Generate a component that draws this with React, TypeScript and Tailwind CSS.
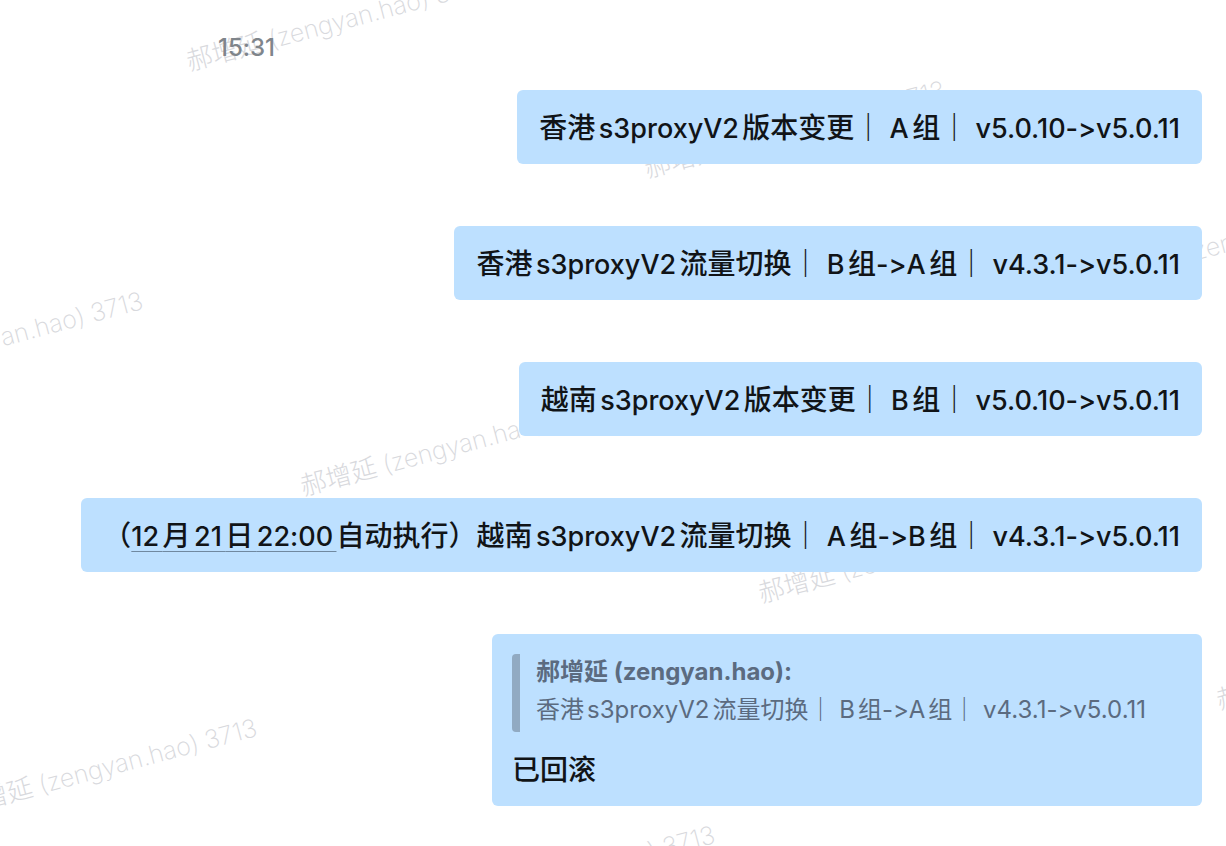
import { Fragment } from 'react';
import type { ReactNode } from 'react';

const WATERMARKS = [
  { left: 187, top: 46 },
  { left: 645, top: 153 },
  { left: 1103, top: 260 },
  { left: -157, top: 364 },
  { left: 301, top: 471 },
  { left: 759, top: 578 },
  { left: 1217, top: 685 },
  { left: -43, top: 791 },
  { left: 415, top: 898 },
];

// Latin runs are set one size down so that they sit evenly beside the ideographs.
function MixedText({ text, latinClass }: { text: string; latinClass: string }) {
  const runs = text.match(/[\x20-\x7e]+|[^\x20-\x7e]+/g) ?? [];
  return (
    <>
      {runs.map((run, index) =>
        /^[\x20-\x7e]/.test(run) ? (
          <span key={index} className={latinClass}>
            {run}
          </span>
        ) : (
          <Fragment key={index}>{run}</Fragment>
        ),
      )}
    </>
  );
}

function Watermark() {
  return (
    <div
      aria-hidden="true"
      className="pointer-events-none absolute inset-0 select-none overflow-hidden"
    >
      {WATERMARKS.map((mark) => (
        <span
          key={`${mark.left}-${mark.top}`}
          className="absolute origin-left -rotate-[15deg] whitespace-nowrap text-[26px] font-extralight leading-8 text-[#d8d9dd]"
          style={{ left: mark.left, top: mark.top }}
        >
          <MixedText text="郝增延 (zengyan.hao) 3713" latinClass="text-[25px] leading-none" />
        </span>
      ))}
    </div>
  );
}

function MessageText({ text }: { text: string }) {
  return <MixedText text={text} latinClass="text-[27px] leading-none" />;
}

function Bubble({ children }: { children: ReactNode }) {
  return (
    <li className="max-w-full rounded-md bg-[#bde0ff] px-[22px] pt-[17px] pb-[15px] text-[28px] leading-[42px] text-[#111417]">
      {children}
    </li>
  );
}

export default function App() {
  return (
    <main className="relative min-h-screen overflow-hidden bg-white font-['Inter','Noto_Sans_CJK_SC',sans-serif] font-medium [font-variant-ligatures:none] [text-autospace:normal]">
      <Watermark />
      <div className="relative flex flex-col pt-8 pr-6 pb-10 pl-6">
        <time className="pl-[194px] text-2xl leading-8 text-[#7f858b]">15:31</time>
        <ul className="mt-[26px] flex flex-col items-end gap-[62px]">
          <Bubble>
            <MessageText text="香港s3proxyV2版本变更｜ A组｜ v5.0.10->v5.0.11" />
          </Bubble>
          <Bubble>
            <MessageText text="香港s3proxyV2流量切换｜ B组->A组｜ v4.3.1->v5.0.11" />
          </Bubble>
          <Bubble>
            <MessageText text="越南s3proxyV2版本变更｜ B组｜ v5.0.10->v5.0.11" />
          </Bubble>
          <Bubble>
            （
            <a
              href="#schedule"
              className="underline decoration-[#7089a0] decoration-1 underline-offset-[5px] [text-decoration-skip-ink:none]"
            >
              <MessageText text="12月21日22:00" />
            </a>
            <MessageText text="自动执行）越南s3proxyV2流量切换｜ A组->B组｜ v4.3.1->v5.0.11" />
          </Bubble>
          <li className="flex max-w-full flex-col gap-[18px] rounded-md bg-[#bde0ff] px-5 pt-5 pb-4 text-[28px] leading-10 text-[#111417]">
            <blockquote className="flex gap-4 pr-9 text-2xl font-normal text-[#5b6b80]">
              <span className="w-2 shrink-0 rounded-l bg-[#91aac2]" />
              <div className="pb-0.5">
                <cite className="block font-bold not-italic leading-9">郝增延 (zengyan.hao):</cite>
                <p className="leading-10">香港s3proxyV2流量切换｜ B组-&gt;A组｜ v4.3.1-&gt;v5.0.11</p>
              </div>
            </blockquote>
            <p>已回滚</p>
          </li>
        </ul>
      </div>
    </main>
  );
}
